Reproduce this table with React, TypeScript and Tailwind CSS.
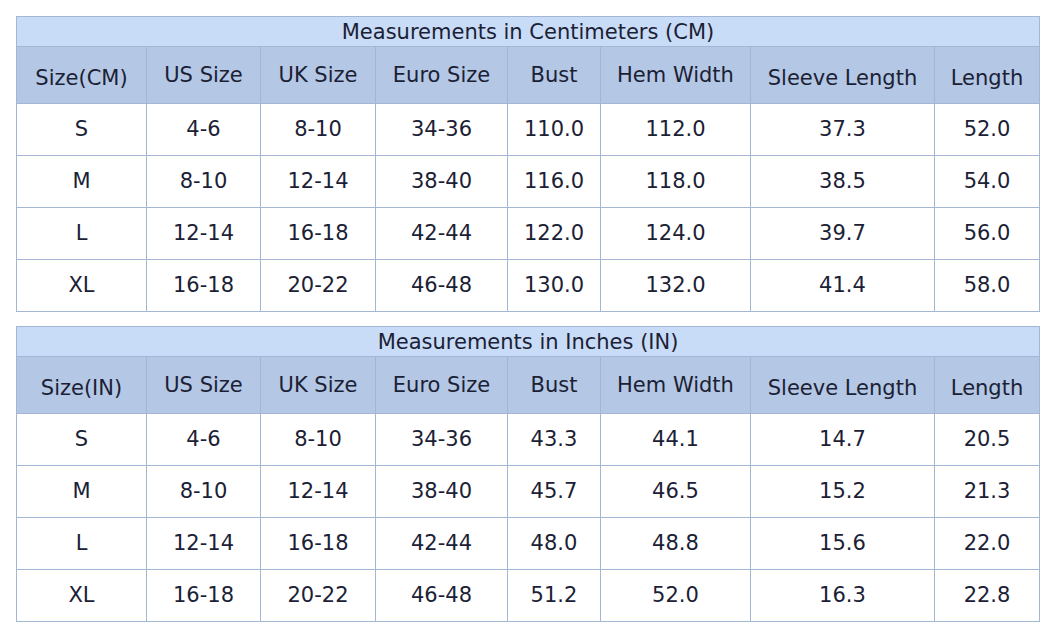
import React from "react";

const cols = [130, 114, 115, 132, 93, 150, 184, 105];
const headers = ["", "US Size", "UK Size", "Euro Size", "Bust", "Hem Width", "Sleeve Length", "Length"];
const lowHeader = [true, false, false, false, false, false, true, true];

const cm = [
  ["S", "4-6", "8-10", "34-36", "110.0", "112.0", "37.3", "52.0"],
  ["M", "8-10", "12-14", "38-40", "116.0", "118.0", "38.5", "54.0"],
  ["L", "12-14", "16-18", "42-44", "122.0", "124.0", "39.7", "56.0"],
  ["XL", "16-18", "20-22", "46-48", "130.0", "132.0", "41.4", "58.0"],
];
const inch = [
  ["S", "4-6", "8-10", "34-36", "43.3", "44.1", "14.7", "20.5"],
  ["M", "8-10", "12-14", "38-40", "45.7", "46.5", "15.2", "21.3"],
  ["L", "12-14", "16-18", "42-44", "48.0", "48.8", "15.6", "22.0"],
  ["XL", "16-18", "20-22", "46-48", "51.2", "52.0", "16.3", "22.8"],
];

function SizeTable({ title, first, rows }: { title: string; first: string; rows: string[][] }) {
  return (
    <table className="w-[1023px] table-fixed border-collapse text-[21px] leading-none text-[#1b2135]">
      <colgroup>
        {cols.map((w, i) => (
          <col key={i} style={{ width: w }} />
        ))}
      </colgroup>
      <tbody>
        <tr className="h-[30px] bg-[#c9dcf7]">
          <td colSpan={8} className="border border-[#a3b6d4] p-0 pt-[1px] text-center font-normal">
            {title}
          </td>
        </tr>
        <tr className="h-[57px] bg-[#b4c7e4]">
          {headers.map((h, i) => (
            <td
              key={i}
              className={`border border-[#a3b6d4] p-0 text-center ${lowHeader[i] ? "pt-[6px]" : ""}`}
            >
              {i === 0 ? first : h}
            </td>
          ))}
        </tr>
        {rows.map((r, ri) => (
          <tr key={ri} className="h-[52px] bg-white">
            {r.map((c, ci) => (
              <td key={ci} className="border border-[#a3b6d4] p-0 text-center">
                {c}
              </td>
            ))}
          </tr>
        ))}
      </tbody>
    </table>
  );
}

export default function App() {
  return (
    <div
      className="min-h-[642px] w-[1055px] bg-white pl-4 pt-4"
      style={{ fontFamily: '"DejaVu Sans", Verdana, sans-serif' }}
    >
      <div className="flex flex-col gap-[14px]">
        <SizeTable title="Measurements in Centimeters (CM)" first="Size(CM)" rows={cm} />
        <SizeTable title="Measurements in Inches (IN)" first="Size(IN)" rows={inch} />
      </div>
    </div>
  );
}
